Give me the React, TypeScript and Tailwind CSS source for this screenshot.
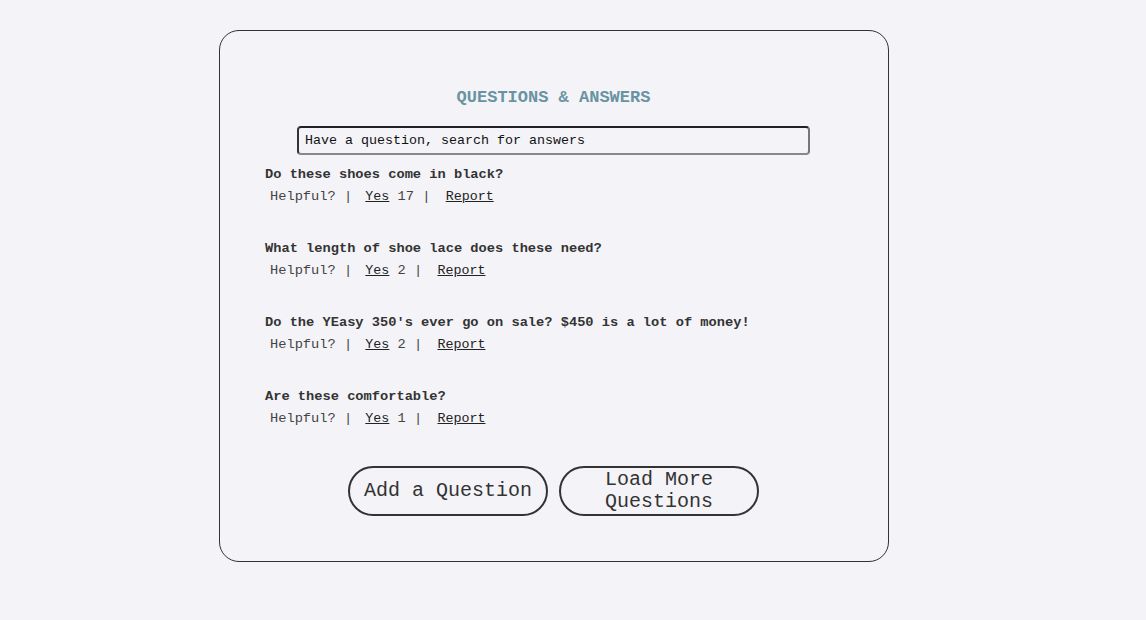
const questions = [
  { text: 'Do these shoes come in black?', helpful: 17 },
  { text: 'What length of shoe lace does these need?', helpful: 2 },
  { text: "Do the YEasy 350's ever go on sale? $450 is a lot of money!", helpful: 2 },
  { text: 'Are these comfortable?', helpful: 1 },
];

const mono = "font-['Liberation_Mono','Courier_New',monospace]";

function QuestionItem({ text, helpful }: { text: string; helpful: number }) {
  return (
    <div className="mb-[30px] last:mb-0">
      <div className="text-[13.7px] leading-[22px] font-bold text-[#333]">{text}</div>
      <div className="text-[13.7px] leading-[22px] text-[#444] pl-[5px] whitespace-pre">
        <span>Helpful? | </span>
        <button className="ml-[5px] text-[13.33px] underline text-[#222]">Yes</button>
        <span> {helpful} | </span>
        <button className="ml-[7px] text-[13.33px] underline text-[#222]">Report</button>
      </div>
    </div>
  );
}

export default function App() {
  return (
    <div className={`min-h-[620px] bg-[#f3f3f8] pt-[30px] ${mono}`}>
      <div className="ml-[219px] w-[670px] h-[532px] border border-[#333] rounded-[20px] pl-[45px] pr-[46px] pt-[57px]">
        <h2 className="text-center text-[17px] leading-[20px] font-bold text-[#6a93a1]">QUESTIONS &amp; ANSWERS</h2>
        <div className="flex justify-center mt-[18px]">
          <input
            className="w-[513px] h-[29px] px-[6px] text-[13.33px] text-[#111] bg-[#f3f3f8] rounded-[4px] border-2 border-t-[#222] border-l-[#333] border-b-[#888] border-r-[#777] outline-none placeholder:text-[#111]"
            placeholder="Have a question, search for answers"
          />
        </div>
        <div className="mt-[9px]">
          {questions.map((q) => (
            <QuestionItem key={q.text} text={q.text} helpful={q.helpful} />
          ))}
        </div>
        <div className="flex justify-center gap-[11px] mt-[36px]">
          <button className="w-[200px] h-[50px] border-2 border-[#333] rounded-full text-[20px] leading-[22px] text-[#333]">
            Add a Question
          </button>
          <button className="w-[200px] h-[50px] border-2 border-[#333] rounded-full text-[20px] leading-[22px] text-[#333] px-[40px]">
            Load More Questions
          </button>
        </div>
      </div>
    </div>
  );
}
